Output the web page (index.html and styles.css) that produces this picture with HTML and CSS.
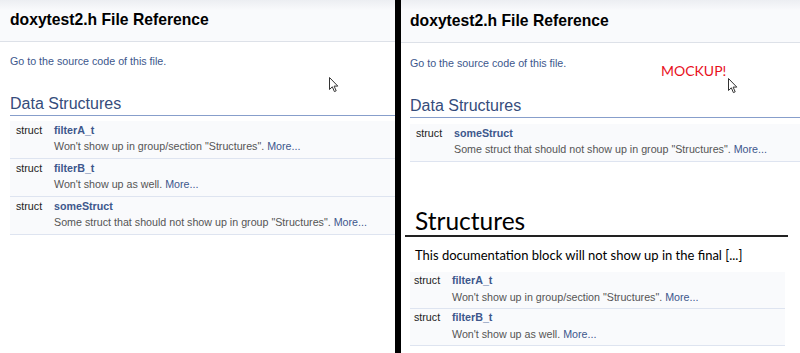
FILE: index.html
```html
<!DOCTYPE html>
<html lang="en">

<head>
    <meta charset="UTF-8">
    <title>doxytest2.h File Reference</title>
    <link rel="stylesheet" href="styles.css">
</head>

<body>
    <div class="panel left">
        <div class="header">
            <div class="title">doxytest2.h File Reference</div>
        </div>
        <div class="contents">
            <p class="srclink"><a href="#">Go to the source code of this file.</a></p>
            <h2 class="groupheader">Data Structures</h2>
            <div class="memberdecls">
                <div class="memitem">
                    <span class="kind">struct</span>
                    <div class="memname">
                        <a class="el" href="#">filterA_t</a>
                        <div class="mdesc">Won't show up in group/section "Structures". <a href="#">More...</a></div>
                    </div>
                </div>
                <div class="memitem">
                    <span class="kind">struct</span>
                    <div class="memname">
                        <a class="el" href="#">filterB_t</a>
                        <div class="mdesc">Won't show up as well. <a href="#">More...</a></div>
                    </div>
                </div>
                <div class="memitem">
                    <span class="kind">struct</span>
                    <div class="memname">
                        <a class="el" href="#">someStruct</a>
                        <div class="mdesc">Some struct that should not show up in group "Structures". <a href="#">More...</a></div>
                    </div>
                </div>
            </div>
        </div>
        <svg class="cursor" width="10" height="16" viewBox="0 0 10 16">
            <path d="M0.5 0.5 L0.5 12.5 L3.3 9.8 L5.4 14.6 L7.2 13.8 L5.1 9.1 L8.8 9.1 Z" fill="#fff" stroke="#333" stroke-width="1"/>
        </svg>
    </div>

    <div class="divider"></div>

    <div class="panel right">
        <div class="header">
            <div class="title">doxytest2.h File Reference</div>
        </div>
        <div class="contents">
            <p class="srclink"><a href="#">Go to the source code of this file.</a></p>
            <h2 class="groupheader">Data Structures</h2>
            <div class="memberdecls">
                <div class="memitem">
                    <span class="kind">struct</span>
                    <div class="memname">
                        <a class="el" href="#">someStruct</a>
                        <div class="mdesc">Some struct that should not show up in group "Structures". <a href="#">More...</a></div>
                    </div>
                </div>
            </div>
            <h1 class="mockhead">Structures</h1>
            <p class="mocktext">This documentation block will not show up in the final [...]</p>
            <div class="memberdecls mock">
                <div class="memitem">
                    <span class="kind">struct</span>
                    <div class="memname">
                        <a class="el" href="#">filterA_t</a>
                        <div class="mdesc">Won't show up in group/section "Structures". <a href="#">More...</a></div>
                    </div>
                </div>
                <div class="memitem">
                    <span class="kind">struct</span>
                    <div class="memname">
                        <a class="el" href="#">filterB_t</a>
                        <div class="mdesc">Won't show up as well. <a href="#">More...</a></div>
                    </div>
                </div>
            </div>
        </div>
        <div class="mockup">MOCKUP!</div>
        <svg class="cursor" width="10" height="16" viewBox="0 0 10 16">
            <path d="M0.5 0.5 L0.5 12.5 L3.3 9.8 L5.4 14.6 L7.2 13.8 L5.1 9.1 L8.8 9.1 Z" fill="#fff" stroke="#333" stroke-width="1"/>
        </svg>
    </div>
</body>

</html>
```

FILE: styles.css
```css
* {
    padding: 0;
    margin: 0;
}
body {
    width: 800px;
    height: 353px;
    overflow: hidden;
    display: flex;
    background: #fff;
    font-family: "Liberation Sans", Arial, sans-serif;
}
a {
    color: #3d578c;
    text-decoration: none;
}
.panel {
    position: relative;
    height: 353px;
}
.left {
    width: 395px;
}
.right {
    flex: 1;
}
.divider {
    width: 6px;
    background: #000;
}
.header {
    height: 41px;
    border-bottom: 1px solid #dde1e8;
    background: linear-gradient(#eceef2, #f9fafc 25%, #f9fafc);
    display: flex;
    align-items: center;
    padding-left: 10px;
}
.right .header {
    height: 42px;
    padding-left: 9px;
}
.title {
    font-size: 15.7px;
    font-weight: bold;
    color: #000;
    padding-bottom: 1px;
}
.contents {
    padding-left: 10px;
}
.right .contents {
    padding-left: 9px;
    padding-top: 1px;
}
.srclink {
    font-size: 10.7px;
    line-height: 14px;
    padding-top: 12px;
}
.groupheader {
    font-size: 16px;
    font-weight: normal;
    color: #354c7b;
    line-height: 20px;
    margin-top: 26px;
    border-bottom: 1px solid #879ecb;
    padding-bottom: 1px;
}
.memberdecls {
    margin-top: 5px;
    font-size: 10.7px;
}
.right .memberdecls {
    margin-top: 6px;
}
.memitem {
    display: flex;
    background: #f9fafc;
    border-bottom: 1px solid #dee4f0;
    padding: 1px 0 4px 6px;
}
.kind {
    width: 38px;
    line-height: 16px;
    color: #222;
}
.memname {
    line-height: 16px;
}
.el {
    font-weight: bold;
    color: #3d578c;
}
.mdesc {
    color: #555;
}
.mockhead {
    font-family: Lato, "Open Sans", sans-serif;
    font-weight: normal;
    font-size: 24.5px;
    line-height: 28px;
    color: #000;
    margin-top: 45px;
    margin-right: 12px;
    margin-left: -5px;
    padding-left: 10px;
    border-bottom: 2px solid #222;
}
.mocktext {
    font-family: Lato, "Open Sans", sans-serif;
    font-size: 13px;
    line-height: 20px;
    margin-top: 8px;
    padding-left: 5px;
    color: #000;
}
.memberdecls.mock {
    margin-top: 7px;
    margin-right: 15px;
}
.mock .memitem {
    padding: 0 0 2px 4px;
}
.mock .kind,
.mock .memname {
    line-height: 17px;
}
.mockup {
    position: absolute;
    left: 260px;
    top: 62px;
    font-family: Lato, "Open Sans", sans-serif;
    font-size: 14px;
    color: #e8101c;
}
.cursor {
    position: absolute;
    top: 77px;
}
.left .cursor {
    left: 329px;
}
.right .cursor {
    left: 327px;
    top: 78px;
}
```
